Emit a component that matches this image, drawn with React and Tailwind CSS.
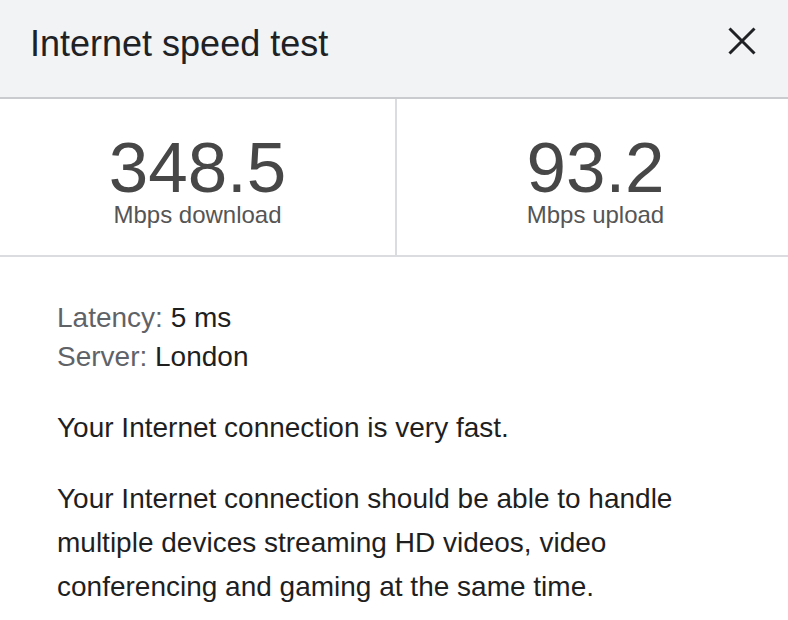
export default function App() {
  return (
    <div className="w-[788px] h-[620px] bg-white overflow-hidden" style={{ fontFamily: '"Liberation Sans", Arial, sans-serif' }}>
      <div className="h-[99px] bg-[#f1f3f4] border-b-2 border-[#c9cbce] flex items-start justify-between pl-[30px] pr-[32px] pt-[26px]">
        <div className="text-[36px] leading-none text-[#202124]">Internet speed test</div>
        <svg width="28" height="28" viewBox="0 0 28 28" className="mt-[1px]">
          <path d="M1.5 1.5 L26.5 26.5 M26.5 1.5 L1.5 26.5" stroke="#202124" strokeWidth="3" fill="none" />
        </svg>
      </div>
      <div className="flex h-[158px] border-b-2 border-[#dadce0]">
        <div className="w-[397px] border-r-2 border-[#dadce0] flex flex-col items-center pt-[33px]">
          <div className="text-[71px] leading-none text-[#474747]">348.5</div>
          <div className="text-[24px] leading-none text-[#555555]">Mbps download</div>
        </div>
        <div className="flex-1 flex flex-col items-center pt-[33px] pl-[6px]">
          <div className="text-[71px] leading-none text-[#474747]">93.2</div>
          <div className="text-[24px] leading-none text-[#555555]">Mbps upload</div>
        </div>
      </div>
      <div className="pl-[57px] pt-[41px] text-[28px] text-[#1f1f1f]">
        <div className="leading-[39px]">
          <span className="text-[#5f6368]">Latency:</span> 5 ms
        </div>
        <div className="leading-[39px]">
          <span className="text-[#5f6368]">Server:</span> London
        </div>
        <p className="leading-[44px] mt-[30px]">Your Internet connection is very fast.</p>
        <p className="leading-[44px] mt-[27px] w-[690px]">
          Your Internet connection should be able to handle multiple devices streaming HD videos, video conferencing and gaming at the same time.
        </p>
      </div>
    </div>
  );
}
